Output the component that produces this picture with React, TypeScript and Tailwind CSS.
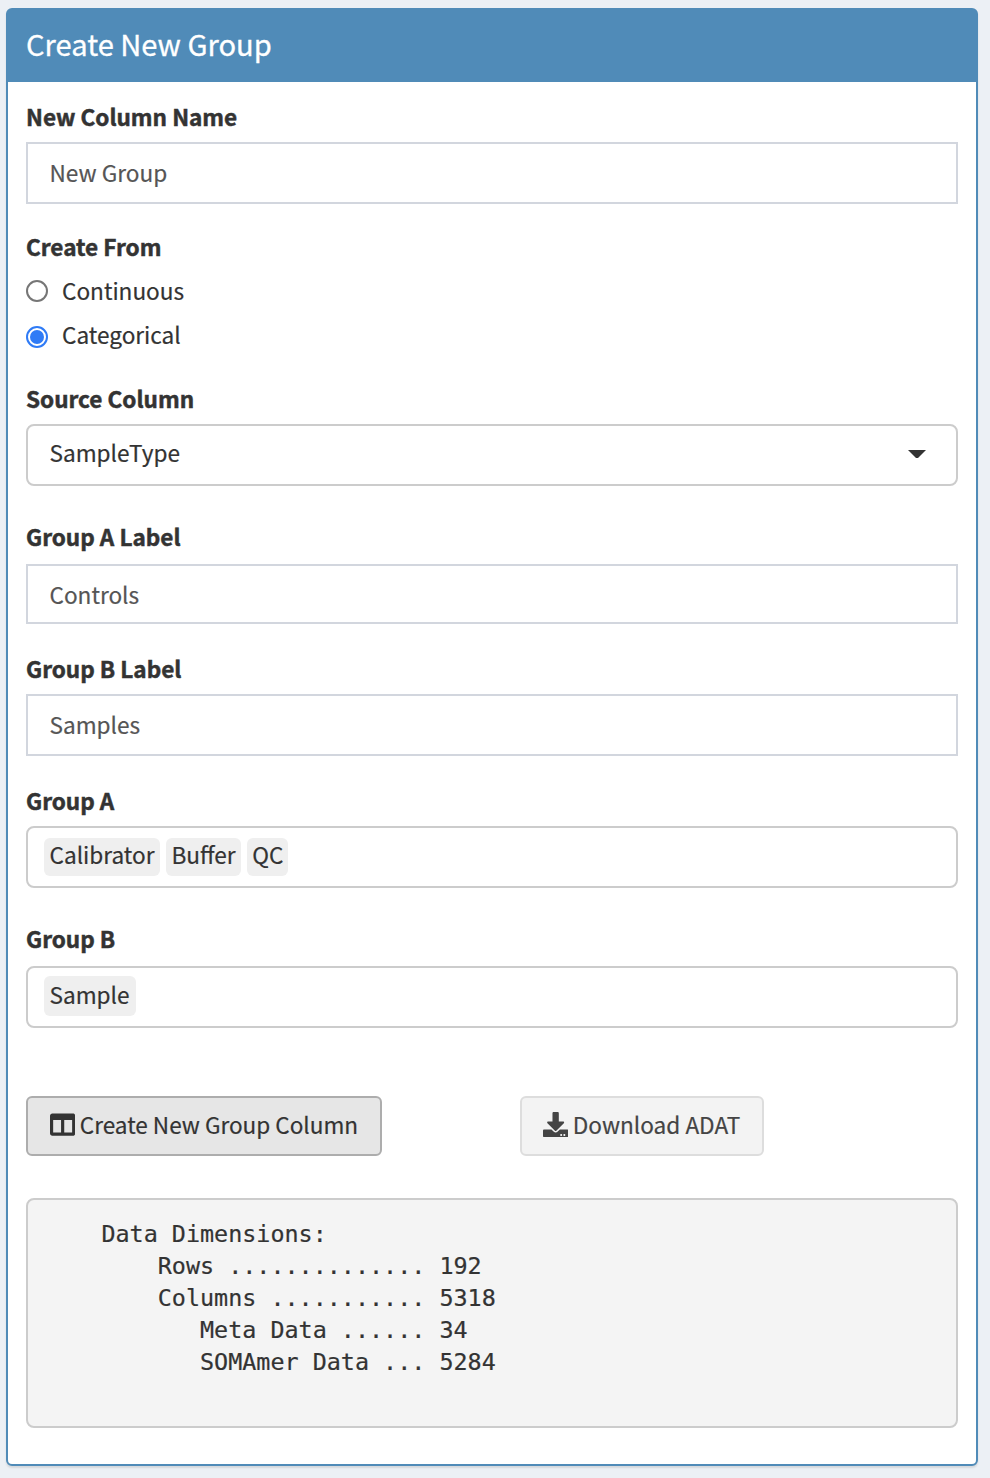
import { useState } from "react";
import type { ReactNode } from "react";
import { FaColumns, FaDownload } from "react-icons/fa";

function Label({ children, loose = false }: { children: ReactNode; loose?: boolean }) {
  return (
    <div
      className={`h-[34px] text-[22.55px] leading-[32px] font-bold whitespace-nowrap [-webkit-text-stroke:0.5px_#333] ${loose ? "mb-[10px]" : "mb-2"}`}
    >
      {children}
    </div>
  );
}

function TextField({ initial, short = false }: { initial: string; short?: boolean }) {
  const [value, setValue] = useState(initial);
  return (
    <input
      value={value}
      onChange={(e) => setValue(e.target.value)}
      className={`block w-full border-2 border-[#d2d6de] bg-white px-[21.5px] text-[#555] outline-none ${short ? "h-[60px] pt-[1px]" : "h-[62px] pb-[1px]"}`}
    />
  );
}

function Radio({ checked, children, onSelect }: { checked: boolean; children: ReactNode; onSelect: () => void }) {
  return (
    <button role="radio" aria-checked={checked} onClick={onSelect} className="flex h-11 items-center gap-[14px]">
      <span
        className={`flex size-[22px] items-center justify-center rounded-full border-2 ${checked ? "mt-[3px] border-[#2f7bf6]" : "border-[#767676]"}`}
      >
        {checked && <span className="size-[14px] rounded-full bg-[#2f7bf6]" />}
      </span>
      <span className="leading-[34px]">{children}</span>
    </button>
  );
}

function TagField({ tags, tall = false }: { tags: string[]; tall?: boolean }) {
  return (
    <div className={`flex h-[62px] items-start gap-[6px] rounded-[8px] border-2 border-[#ccc] bg-white px-4 ${tall ? "pt-2" : "pt-[10px]"}`}>
      {tags.map((tag) => (
        <span
          key={tag}
          className={`rounded-[6px] bg-[#efefef] pl-[5.5px] ${tall ? "h-10 pr-[6px] leading-[38px]" : "h-[38px] pr-[5px] leading-[34px] first:pr-[5.6px]"}`}
        >
          {tag}
        </span>
      ))}
    </div>
  );
}

const dimensions = `     Data Dimensions:
         Rows .............. 192
         Columns ........... 5318
            Meta Data ...... 34
            SOMAmer Data ... 5284
`;

export default function App() {
  const [source, setSource] = useState("Categorical");
  return (
    <div className="h-[1478px] w-[990px] bg-[#ecf0f5] pt-2 pl-[6px] font-['Noto_Sans_CJK_SC',sans-serif] text-[22.6px] text-[#333] [-webkit-text-stroke:0.2px_currentColor]">
      <section className="flex h-[1458px] w-[972px] flex-col rounded-[6px] border-2 border-[#508bb8] bg-white shadow-[0_2px_2px_rgba(0,0,0,0.1)]">
        <header className="h-[72px] shrink-0 bg-[#508bb8] px-[18px] text-[29.1px] leading-[66px] text-white [-webkit-text-stroke:0.3px_#fff]">
          Create New Group
        </header>
        <div className="flex flex-col px-[18px] pt-[18px]">
          <Label>New Column Name</Label>
          <TextField initial="New Group" />

          <div className="mt-[26px]">
            <Label>Create From</Label>
          </div>
          <div role="radiogroup" className="-mt-[3px] flex flex-col">
            {["Continuous", "Categorical"].map((name) => (
              <Radio key={name} checked={source === name} onSelect={() => setSource(name)}>
                {name}
              </Radio>
            ))}
          </div>

          <div className="mt-[25px]">
            <Label>Source Column</Label>
            <div className="flex h-[62px] items-center justify-between rounded-[8px] border-2 border-[#ccc] pr-[30px] pb-[4px] pl-[21.5px]">
              <span>SampleType</span>
              <svg width="18" height="8" viewBox="0 0 18 8" className="mt-[2px] fill-[#333]">
                <path d="M0 0h18L10 8H8z" />
              </svg>
            </div>
          </div>

          <div className="mt-[34px]">
            <Label loose>Group A Label</Label>
            <TextField initial="Controls" short />
          </div>
          <div className="mt-[28px]">
            <Label>Group B Label</Label>
            <TextField initial="Samples" />
          </div>
          <div className="mt-[28px]">
            <Label>Group A</Label>
            <TagField tags={["Calibrator", "Buffer", "QC"]} />
          </div>
          <div className="mt-[34px]">
            <Label loose>Group B</Label>
            <TagField tags={["Sample"]} tall />
          </div>

          <div className="mt-[68px] grid grid-cols-[494px_1fr]">
            <button className="flex h-[60px] w-[356px] items-center gap-[5px] rounded-[6px] border-2 border-[#adadad] bg-[#e6e6e6] pb-[1px] pl-[21.5px] whitespace-nowrap">
              <FaColumns className="mb-[2px] size-[25.3px] shrink-0" />
              <span className="pb-[2px] text-[22.55px]">Create New Group Column</span>
            </button>
            <button className="flex h-[60px] w-[244px] items-center gap-[5px] rounded-[6px] border-2 border-[#ddd] bg-[#f3f3f3] pb-[1px] pl-[20.5px] whitespace-nowrap text-[#444]">
              <FaDownload className="mb-[2px] size-[25.3px] shrink-0" />
              <span className="pb-[2px]">Download ADAT</span>
            </button>
          </div>

          <pre className="mt-[42px] h-[230px] rounded-[8px] border-2 border-[#ccc] bg-[#f4f4f4] px-[3px] pt-[18px] font-['DejaVu_Sans_Mono',monospace] text-[23.4px] leading-8">
            {dimensions}
          </pre>
        </div>
      </section>
    </div>
  );
}
